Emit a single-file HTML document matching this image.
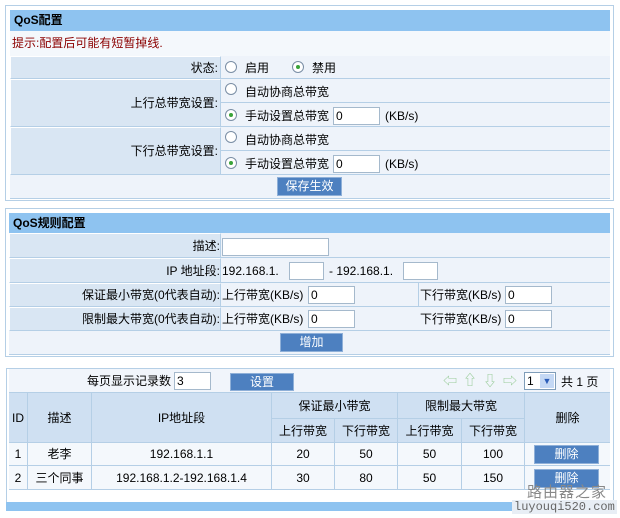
<!DOCTYPE html>
<html><head><meta charset="utf-8"><style>
*{margin:0;padding:0;box-sizing:border-box}
body{width:620px;height:518px;background:#fff;position:relative;overflow:hidden;font:12px "Liberation Sans","Noto Sans CJK SC",sans-serif;color:#000}
div,span{position:absolute;white-space:nowrap}
span{line-height:14px}
.frame{border:1px solid #b5cfe6}
.hd{background:#8ec3f0;font-weight:bold;padding-left:4px;line-height:20px;font-size:12px}
.lb{background:#d9e6f3;text-align:right;border:1px solid #fff;border-right:1px solid #b5cfe6;border-bottom:1px solid #b5cfe6}
.vl{background:#eef3fa;border-bottom:1px solid #b5cfe6}
.in{background:#fff;border:1px solid #a5b9cc;height:18px;padding-left:2px;line-height:16px}
.btn{background:#4d80c0;color:#fff;text-align:center;line-height:17px;border:1px solid #8fb0d8}
.r{width:12px;height:12px;border:1px solid #7a8ea5;border-radius:50%;background:#fff}
.r.on::after{content:"";position:absolute;left:3px;top:3px;width:4px;height:4px;border-radius:50%;background:#3aa33a}
.cell{border-right:1px solid #b5cfe6;border-bottom:1px solid #b5cfe6;text-align:center}
</style></head><body>

<!-- section 1 -->
<div class="frame" style="left:5px;top:5px;width:609px;height:196px"></div>
<div class="hd" style="left:10px;top:10px;width:600px;height:21px">QoS配置</div>
<div style="left:10px;top:31px;width:600px;height:25px;background:#f4f8fc;color:#8b0000;line-height:24px;padding-left:2px">提示:配置后可能有短暂掉线.</div>
<div class="lb" style="left:10px;top:56px;width:211px;height:23px;line-height:22px;padding-right:2px">状态:</div>
<div class="vl" style="left:221px;top:56px;width:389px;height:23px"></div>
<div class="r" style="left:225px;top:61px"></div><span style="left:245px;top:61px">启用</span>
<div class="r on" style="left:292px;top:61px"></div><span style="left:312px;top:61px">禁用</span>

<div class="lb" style="left:10px;top:79px;width:211px;height:48px;line-height:46px;padding-right:2px">上行总带宽设置:</div>
<div class="vl" style="left:221px;top:79px;width:389px;height:24px"></div>
<div class="vl" style="left:221px;top:103px;width:389px;height:24px"></div>
<div class="r" style="left:225px;top:83px"></div><span style="left:245px;top:85px">自动协商总带宽</span>
<div class="r on" style="left:225px;top:109px"></div><span style="left:245px;top:109px">手动设置总带宽</span>
<div class="in" style="left:333px;top:107px;width:47px">0</div><span style="left:385px;top:109px">(KB/s)</span>

<div class="lb" style="left:10px;top:127px;width:211px;height:48px;line-height:46px;padding-right:2px">下行总带宽设置:</div>
<div class="vl" style="left:221px;top:127px;width:389px;height:24px"></div>
<div class="vl" style="left:221px;top:151px;width:389px;height:24px"></div>
<div class="r" style="left:225px;top:131px"></div><span style="left:245px;top:133px">自动协商总带宽</span>
<div class="r on" style="left:225px;top:157px"></div><span style="left:245px;top:157px">手动设置总带宽</span>
<div class="in" style="left:333px;top:155px;width:47px">0</div><span style="left:385px;top:157px">(KB/s)</span>
<div class="vl" style="left:10px;top:175px;width:600px;height:24px"></div>
<div class="btn" style="left:277px;top:177px;width:65px;height:19px">保存生效</div>

<!-- section 2 -->
<div class="frame" style="left:5px;top:208px;width:609px;height:149px"></div>
<div class="hd" style="left:9px;top:213px;width:601px;height:20px">QoS规则配置</div>
<div class="lb" style="left:9px;top:233px;width:212px;height:25px;line-height:24px">描述:</div>
<div class="vl" style="left:221px;top:233px;width:389px;height:25px"></div>
<div class="in" style="left:222px;top:238px;width:107px"></div>
<div class="lb" style="left:9px;top:258px;width:212px;height:25px;line-height:24px">IP 地址段:</div>
<div class="vl" style="left:221px;top:258px;width:389px;height:25px"></div>
<span style="left:222px;top:264px">192.168.1.</span>
<div class="in" style="left:289px;top:262px;width:35px"></div>
<span style="left:329px;top:264px">- 192.168.1.</span>
<div class="in" style="left:403px;top:262px;width:35px"></div>
<div class="lb" style="left:9px;top:283px;width:212px;height:24px;line-height:23px">保证最小带宽(0代表自动):</div>
<div class="vl" style="left:221px;top:283px;width:389px;height:24px"></div>
<div style="left:418px;top:283px;width:1px;height:48px;background:#b5cfe6"></div>
<span style="left:222px;top:288px">上行带宽(KB/s)</span><div class="in" style="left:308px;top:286px;width:47px">0</div>
<span style="left:420px;top:288px">下行带宽(KB/s)</span><div class="in" style="left:505px;top:286px;width:47px">0</div>
<div class="lb" style="left:9px;top:307px;width:212px;height:24px;line-height:23px">限制最大带宽(0代表自动):</div>
<div class="vl" style="left:221px;top:307px;width:389px;height:24px"></div>
<span style="left:222px;top:312px">上行带宽(KB/s)</span><div class="in" style="left:308px;top:310px;width:47px">0</div>
<span style="left:420px;top:312px">下行带宽(KB/s)</span><div class="in" style="left:505px;top:310px;width:47px">0</div>
<div class="vl" style="left:9px;top:331px;width:601px;height:24px"></div>
<div class="btn" style="left:280px;top:333px;width:63px;height:19px">增加</div>

<!-- section 3 -->
<div class="frame" style="left:6px;top:368px;width:608px;height:135px"></div>
<div class="vl" style="left:9px;top:369px;width:601px;height:24px;background:#f1f5fb"></div>
<span style="left:87px;top:374px">每页显示记录数</span>
<div class="in" style="left:174px;top:372px;width:37px">3</div>
<div class="btn" style="left:230px;top:373px;width:64px;height:18px">设置</div>
<span style="left:443px;top:374px;color:#9c9;font-size:14px">⇦</span>
<span style="left:463px;top:373px;color:#9c9;font-size:14px">⇧</span>
<span style="left:483px;top:374px;color:#9c9;font-size:14px">⇩</span>
<span style="left:503px;top:374px;color:#9c9;font-size:14px">⇨</span>
<div style="left:524px;top:372px;width:32px;height:18px;border:1px solid #7f9db9;background:#fff;line-height:16px;padding-left:2px">1<span style="right:1px;top:1px;width:14px;height:14px;background:#c4d8f4;color:#2a5cb8;font-size:9px;text-align:center;line-height:14px">▼</span></div>
<span style="left:561px;top:375px">共 1 页</span>

<div style="left:9px;top:393px;width:601px;height:97px;background:#cfe0f2"></div>
<div style="left:9px;top:443px;width:601px;height:47px;background:#f4f8fc"></div>
<div class="cell" style="left:9px;top:393px;width:19px;height:50px;line-height:50px">ID</div>
<div class="cell" style="left:28px;top:393px;width:64px;height:50px;line-height:50px">描述</div>
<div class="cell" style="left:92px;top:393px;width:180px;height:50px;line-height:50px">IP地址段</div>
<div class="cell" style="left:272px;top:393px;width:126px;height:26px;line-height:26px">保证最小带宽</div>
<div class="cell" style="left:398px;top:393px;width:127px;height:26px;line-height:26px">限制最大带宽</div>
<div class="cell" style="left:272px;top:419px;width:63px;height:24px;line-height:24px">上行带宽</div>
<div class="cell" style="left:335px;top:419px;width:63px;height:24px;line-height:24px">下行带宽</div>
<div class="cell" style="left:398px;top:419px;width:64px;height:24px;line-height:24px">上行带宽</div>
<div class="cell" style="left:462px;top:419px;width:63px;height:24px;line-height:24px">下行带宽</div>
<div class="cell" style="left:525px;top:393px;width:85px;height:50px;line-height:50px;border-right:0">删除</div>

<div class="cell" style="left:9px;top:443px;width:19px;height:23px;line-height:23px">1</div>
<div class="cell" style="left:28px;top:443px;width:64px;height:23px;line-height:23px">老李</div>
<div class="cell" style="left:92px;top:443px;width:180px;height:23px;line-height:23px">192.168.1.1</div>
<div class="cell" style="left:272px;top:443px;width:63px;height:23px;line-height:23px">20</div>
<div class="cell" style="left:335px;top:443px;width:63px;height:23px;line-height:23px">50</div>
<div class="cell" style="left:398px;top:443px;width:64px;height:23px;line-height:23px">50</div>
<div class="cell" style="left:462px;top:443px;width:63px;height:23px;line-height:23px">100</div>
<div class="cell" style="left:525px;top:443px;width:85px;height:23px;border-right:0"></div>
<div class="btn" style="left:534px;top:445px;width:65px;height:19px">删除</div>

<div class="cell" style="left:9px;top:466px;width:19px;height:24px;line-height:24px">2</div>
<div class="cell" style="left:28px;top:466px;width:64px;height:24px;line-height:24px">三个同事</div>
<div class="cell" style="left:92px;top:466px;width:180px;height:24px;line-height:24px">192.168.1.2-192.168.1.4</div>
<div class="cell" style="left:272px;top:466px;width:63px;height:24px;line-height:24px">30</div>
<div class="cell" style="left:335px;top:466px;width:63px;height:24px;line-height:24px">80</div>
<div class="cell" style="left:398px;top:466px;width:64px;height:24px;line-height:24px">50</div>
<div class="cell" style="left:462px;top:466px;width:63px;height:24px;line-height:24px">150</div>
<div class="cell" style="left:525px;top:466px;width:85px;height:24px;border-right:0"></div>
<div class="btn" style="left:534px;top:469px;width:65px;height:19px">删除</div>

<div style="left:6px;top:502px;width:608px;height:9px;background:#8ec3f0"></div>
<span style="left:527px;top:484px;font-size:15px;line-height:17px;color:#888;letter-spacing:1px">路由器之家</span>
<span style="left:512px;top:500px;font:12px 'Liberation Mono',monospace;line-height:14px;color:#666;background:#e8eef5;padding:0 2px">luyouqi520.com</span>
</body></html>
